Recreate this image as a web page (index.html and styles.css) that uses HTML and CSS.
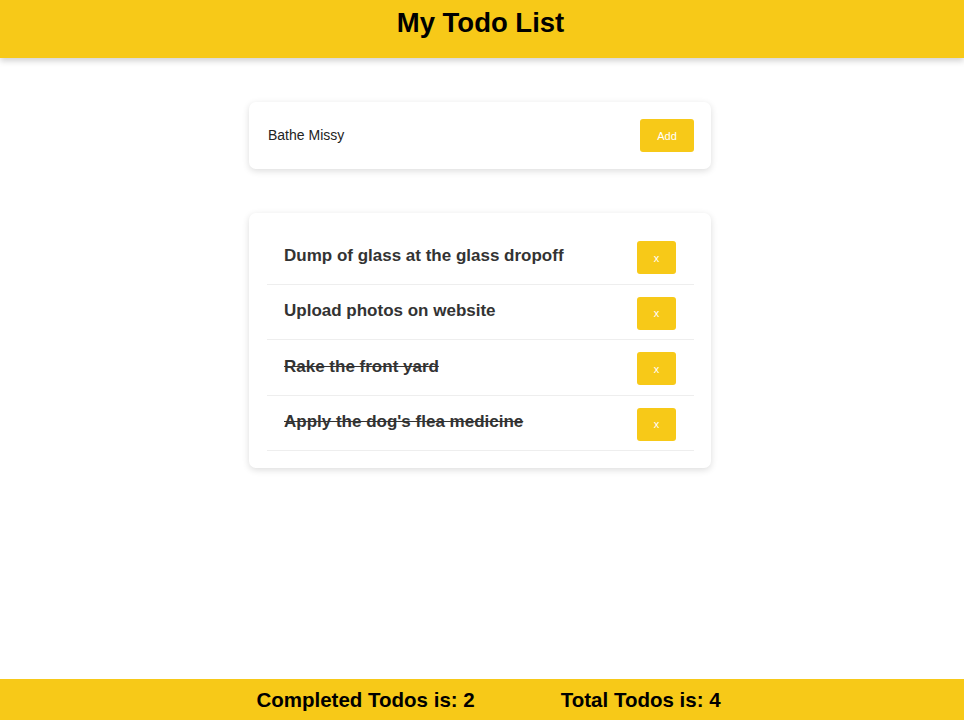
FILE: index.html
```html
<!DOCTYPE html>
<html>
<head>
<meta charset="utf-8">
<link rel="stylesheet" href="styles.css">
</head>
<body>
<header class="topbar"><h1 class="title">My Todo List</h1></header>
<main class="main">
  <form class="card add-card">
    <span class="add-input">Bathe Missy</span>
    <button type="button" class="btn add-btn">Add</button>
  </form>
  <section class="card list-card">
    <ul class="list">
      <li class="item"><span class="item-text">Dump of glass at the glass dropoff</span><button type="button" class="btn del-btn">x</button></li>
      <li class="item"><span class="item-text">Upload photos on website</span><button type="button" class="btn del-btn">x</button></li>
      <li class="item done"><span class="item-text">Rake the front yard</span><button type="button" class="btn del-btn">x</button></li>
      <li class="item done"><span class="item-text">Apply the dog's flea medicine</span><button type="button" class="btn del-btn">x</button></li>
    </ul>
  </section>
</main>
<footer class="footer">
  <span class="stat">Completed Todos is: 2</span>
  <span class="stat">Total Todos is: 4</span>
</footer>
</body>
</html>
```

FILE: styles.css
```css
* { box-sizing: border-box; }
html, body { height: 100%; }
body {
  margin: 0;
  font-family: "Liberation Sans", Arial, sans-serif;
  background: #fff;
  display: flex;
  flex-direction: column;
  color: #000;
}
.topbar {
  height: 58px;
  background: #f7c918;
  box-shadow: 0 3px 6px rgba(0,0,0,0.18);
  display: flex;
  justify-content: center;
  padding-top: 7px;
  padding-right: 3px;
}
.title {
  margin: 0;
  font-size: 27.5px;
  font-weight: bold;
  line-height: 32px;
}
.main {
  flex: 1;
  display: flex;
  flex-direction: column;
  align-items: center;
  padding-top: 44px;
  padding-right: 4px;
}
.card {
  width: 462px;
  background: #fff;
  border-radius: 7px;
  box-shadow: 0 2px 7px rgba(0,0,0,0.14);
}
.add-card {
  margin: 0;
  height: 67px;
  display: flex;
  align-items: center;
  justify-content: space-between;
  padding: 0 17px 0 19px;
}
.add-input {
  font-size: 14px;
  color: #222;
  margin-top: -1px;
}
.btn {
  background: #f7c918;
  border: none;
  border-radius: 3px;
  color: #fff;
  font-family: "Liberation Sans", Arial, sans-serif;
  padding: 0;
}
.add-btn {
  width: 54px;
  height: 33px;
  font-size: 11px;
}
.list-card {
  margin-top: 44px;
  padding: 16px 17px 17px 18px;
}
.list {
  list-style: none;
  margin: 0;
  padding: 0;
}
.item {
  height: 55.5px;
  border-bottom: 1px solid #eeeeee;
  display: flex;
  align-items: center;
  justify-content: space-between;
  padding: 3px 18px 0 17px;
}
.item-text {
  font-size: 17px;
  font-weight: bold;
  color: #333;
  margin-top: -4px;
}
.done .item-text { text-decoration: line-through; }
.del-btn {
  width: 39px;
  height: 33px;
  font-size: 11px;
}
.footer {
  height: 41px;
  background: #f7c918;
  display: flex;
  justify-content: center;
  align-items: center;
  gap: 86px;
  padding-left: 13px;
}
.stat {
  font-size: 20.5px;
  font-weight: bold;
}
```
